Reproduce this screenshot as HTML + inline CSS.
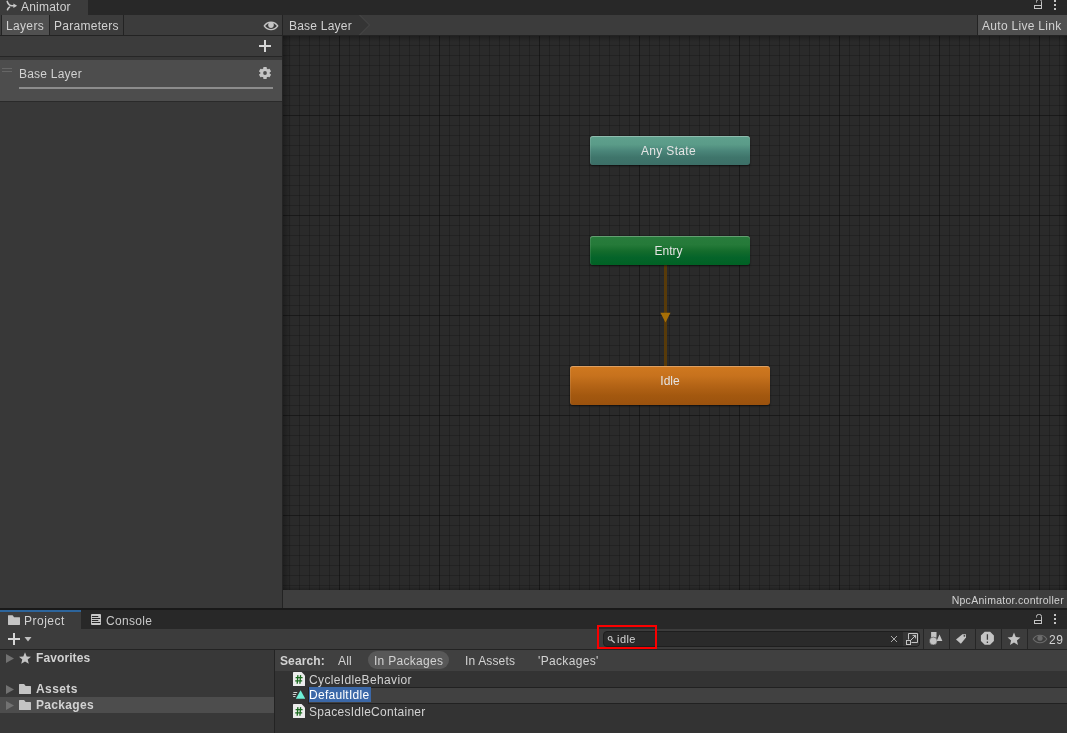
<!DOCTYPE html>
<html><head><meta charset="utf-8"><title>Animator</title>
<style>
*{box-sizing:border-box;margin:0;padding:0}
html,body{width:1067px;height:733px;overflow:hidden;background:#383838}
body{position:relative;font-family:"Liberation Sans",sans-serif;font-size:12px;color:#d2d2d2;line-height:16px;-webkit-font-smoothing:antialiased}
.a{position:absolute}
.t{position:absolute;white-space:nowrap;line-height:16px;height:16px;letter-spacing:.22px;will-change:transform}
.b{font-weight:bold;letter-spacing:0}
svg{position:absolute;overflow:visible}
</style></head><body>

<!-- ===== Animator window ===== -->
<div class="a" style="left:0;top:0;width:1067px;height:15px;background:#282828"></div>
<div class="a" style="left:0;top:0;width:88px;height:15px;background:#3c3c3c"></div>
<svg style="left:0;top:0" width="20" height="12" viewBox="0 0 20 12"><path d="M7.2 1.4C8 3.8 9.6 5.600 12 5.800H14.2M7.500 9.700C7.800 8.600 8.500 7.700 9.500 7.100" fill="none" stroke="#c8c8c8" stroke-width="1.600" stroke-linecap="round"/><path d="M13.400 3.500L17.100 5.800L13.400 8.100Z" fill="#c8c8c8"/></svg>
<div class="t" style="left:21px;top:-1px">Animator</div>
<!-- lock + menu (top) -->
<svg style="left:1033px;top:-2px" width="12" height="12" viewBox="0 0 12 12"><rect x="1.5" y="7.5" width="7" height="3" fill="none" stroke="#c4c4c4" stroke-width="1"/><path d="M3.5 4.5V3.5Q3.5 1.5 5.5 1.5H6.5Q8.5 1.5 8.5 3.5V7.5" fill="none" stroke="#c4c4c4" stroke-width="1"/></svg>
<div class="a" style="left:1054px;top:0;width:2px;height:2px;background:#c4c4c4"></div>
<div class="a" style="left:1054px;top:4px;width:2px;height:2px;background:#c4c4c4"></div>
<div class="a" style="left:1054px;top:8px;width:2px;height:2px;background:#c4c4c4"></div>

<div class="a" style="left:0;top:15px;width:1067px;height:21px;background:#3c3c3c;border-bottom:1px solid #232323"></div>
<div class="a" style="left:1px;top:15px;width:1px;height:20px;background:#232323"></div>
<div class="a" style="left:2px;top:15px;width:48px;height:20px;background:#505050;border-right:1px solid #232323"></div>
<div class="a" style="left:50px;top:15px;width:74px;height:20px;border-right:1px solid #232323"></div>
<div class="t" style="left:6px;top:18px;letter-spacing:.34px">Layers</div>
<div class="t" style="left:54px;top:18px;letter-spacing:.27px">Parameters</div>
<!-- eye -->
<svg style="left:263px;top:20px" width="16" height="12" viewBox="0 0 16 12"><path d="M1.300 5.900C3 3.200 5.500 2.200 8 2.200S13 3.200 14.700 5.900C13 8.600 10.500 9.600 8 9.600S3 8.600 1.300 5.900Z" fill="none" stroke="#c4c4c4" stroke-width="1.400"/><circle cx="8" cy="5.100" r="2.800" fill="#c4c4c4"/></svg>

<!-- left panel -->
<div class="a" style="left:0;top:36px;width:282px;height:21px;background:#3c3c3c;border-bottom:1px solid #262626"></div>
<div class="a" style="left:259px;top:45px;width:12px;height:2px;background:#d6d6d6"></div>
<div class="a" style="left:264px;top:40px;width:2px;height:12px;background:#d6d6d6"></div>
<div class="a" style="left:0;top:60px;width:282px;height:42px;background:#4d4d4d;border-bottom:1px solid #2a2a2a"></div>
<div class="a" style="left:2px;top:68px;width:10px;height:1px;background:#666"></div>
<div class="a" style="left:2px;top:71px;width:10px;height:1px;background:#666"></div>
<div class="t" style="left:19px;top:66px">Base Layer</div>
<div class="a" style="left:19px;top:87px;width:254px;height:2px;background:#8c8c8c"></div>
<!-- gear -->
<svg style="left:259px;top:67px" width="12" height="12" viewBox="-6 -6 12 12"><g fill="#c4c4c4"><circle r="4.700"/><rect x="-1.700" y="-6.100" width="3.400" height="12.200" rx=".5"/><rect x="-1.700" y="-6.100" width="3.400" height="12.200" rx=".5" transform="rotate(60)"/><rect x="-1.700" y="-6.100" width="3.400" height="12.200" rx=".5" transform="rotate(120)"/></g><circle r="1.900" fill="#4d4d4d"/></svg>

<!-- graph -->
<div class="a" style="left:283px;top:36px;width:784px;height:554px;background-color:#2a2a2a;
background-image:
linear-gradient(to right,rgba(0,0,0,.26) 1px,transparent 1px),
linear-gradient(to bottom,rgba(0,0,0,.26) 1px,transparent 1px),
linear-gradient(to right,rgba(0,0,0,.18) 1px,transparent 1px),
linear-gradient(to bottom,rgba(0,0,0,.18) 1px,transparent 1px);
background-size:100px 100px,100px 100px,10px 10px,10px 10px;
background-position:56px 0,0 79px,6px 0,0 9px"></div>
<div class="a" style="left:283px;top:36px;width:8px;height:554px;background:linear-gradient(to right,rgba(0,0,0,.28),rgba(0,0,0,0))"></div>
<div class="a" style="left:283px;top:36px;width:784px;height:6px;background:linear-gradient(to bottom,rgba(0,0,0,.25),rgba(0,0,0,0))"></div>
<div class="a" style="left:1062px;top:36px;width:5px;height:554px;background:linear-gradient(to left,rgba(0,0,0,.25),rgba(0,0,0,0))"></div>
<div class="a" style="left:283px;top:586px;width:784px;height:4px;background:linear-gradient(to top,rgba(0,0,0,.22),rgba(0,0,0,0))"></div>
<div class="a" style="left:282px;top:15px;width:1px;height:593px;background:#232323"></div>

<!-- breadcrumb -->
<svg style="left:283px;top:15px" width="90" height="20" viewBox="0 0 90 20"><path d="M0 0H76.5L86.5 10L76.5 20H0Z" fill="#353535"/><path d="M76.5 0L86.5 10L76.5 20" fill="none" stroke="#4a4a4a" stroke-width="1"/></svg>
<div class="t" style="left:289px;top:18px">Base Layer</div>
<div class="a" style="left:977px;top:15px;width:90px;height:20px;background:#505050;border-left:1px solid #232323"></div>
<div class="t" style="left:982px;top:18px;letter-spacing:.3px">Auto Live Link</div>

<!-- nodes -->
<div class="a" style="left:664px;top:265px;width:3px;height:101px;background:#573a09"></div>
<svg style="left:660px;top:312px" width="12" height="12" viewBox="0 0 12 12"><path d="M0.4 0.7H10.5L5.5 10.5Z" fill="#a66f06"/></svg>
<div class="a" style="left:590px;top:136px;width:160px;height:29px;border-radius:3px;background:linear-gradient(#5fa18d,#5a9b88 30%,#4a8579 52%,#3f756b 74%,#3c6f67);box-shadow:0 1px 2px rgba(0,0,0,.55),inset 0 1px 0 rgba(255,255,255,.3),inset 1px 0 0 rgba(255,255,255,.1)"></div>
<div class="t" style="left:590px;top:143px;width:157px;text-align:center;color:#e4e4e4;letter-spacing:.32px">Any State</div>
<div class="a" style="left:590px;top:236px;width:160px;height:29px;border-radius:3px;background:linear-gradient(#287c3c,#257a39 30%,#146c2c 52%,#05642a 74%,#006224);box-shadow:0 1px 2px rgba(0,0,0,.55),inset 0 1px 0 rgba(255,255,255,.28),inset 1px 0 0 rgba(255,255,255,.1)"></div>
<div class="t" style="left:590px;top:243px;width:157px;text-align:center;color:#e4e4e4;letter-spacing:0">Entry</div>
<div class="a" style="left:570px;top:366px;width:200px;height:39px;border-radius:3px;background:linear-gradient(#cf781f,#c7721d 25%,#b46416 50%,#a3580f 76%,#9b520e);box-shadow:0 1px 2px rgba(0,0,0,.55),inset 0 1px 0 rgba(255,255,255,.3),inset 1px 0 0 rgba(255,255,255,.1)"></div>
<div class="t" style="left:570px;top:373px;width:200px;text-align:center;color:#e4e4e4;letter-spacing:0">Idle</div>

<!-- footer -->
<div class="a" style="left:283px;top:590px;width:784px;height:18px;background:#3e3e3e"></div>
<div class="t" style="left:851px;top:592px;width:213px;text-align:right;font-size:10.5px;letter-spacing:.28px">NpcAnimator.controller</div>

<!-- separator -->
<div class="a" style="left:0;top:608px;width:1067px;height:2px;background:#191919"></div>

<!-- ===== Project window ===== -->
<div class="a" style="left:0;top:610px;width:1067px;height:19px;background:#282828"></div>
<div class="a" style="left:0;top:610px;width:81px;height:19px;background:#3c3c3c;border-top:2px solid #2d659c"></div>
<svg style="left:7px;top:614px" width="14" height="12" viewBox="0 0 14 12"><path d="M1 1.6Q1 1.2 1.4 1.2H5.2Q5.6 1.2 5.9 1.6L7 3.2H12.6Q13 3.2 13 3.6V10.6Q13 11 12.6 11H1.4Q1 11 1 10.6Z" fill="#c4c4c4"/></svg>
<div class="t" style="left:24px;top:613px;letter-spacing:.5px">Project</div>
<svg style="left:90px;top:614px" width="12" height="12" viewBox="0 0 12 12"><rect x="1" y="0" width="10" height="11" rx="1" fill="#c8c8c8"/><path d="M2.300 2.500H7.900M2.300 4.500H9.800M2.300 6.500H7.900M2.300 8.500H9.800" stroke="#282828" stroke-width="1" stroke-linecap="round"/></svg>
<div class="t" style="left:106px;top:613px;color:#c8c8c8;letter-spacing:.3px">Console</div>
<svg style="left:1033px;top:613px" width="12" height="12" viewBox="0 0 12 12"><rect x="1.5" y="7.5" width="7" height="3" fill="none" stroke="#c4c4c4" stroke-width="1"/><path d="M3.5 4.5V3.5Q3.5 1.5 5.5 1.5H6.5Q8.5 1.5 8.5 3.5V7.5" fill="none" stroke="#c4c4c4" stroke-width="1"/></svg>
<div class="a" style="left:1054px;top:614px;width:2px;height:2px;background:#c4c4c4"></div>
<div class="a" style="left:1054px;top:618px;width:2px;height:2px;background:#c4c4c4"></div>
<div class="a" style="left:1054px;top:622px;width:2px;height:2px;background:#c4c4c4"></div>

<div class="a" style="left:0;top:629px;width:1067px;height:21px;background:#3c3c3c;border-bottom:1px solid #232323"></div>
<div class="a" style="left:8px;top:638px;width:12px;height:2px;background:#d6d6d6"></div>
<div class="a" style="left:13px;top:633px;width:2px;height:12px;background:#d6d6d6"></div>
<svg style="left:24px;top:636px" width="8" height="6" viewBox="0 0 8 6"><path d="M.500 .900H7.500L4 5.500Z" fill="#c0c0c0"/></svg>

<!-- tree -->
<div class="a" style="left:0;top:650px;width:274px;height:83px;background:#383838"></div>
<div class="a" style="left:0;top:697px;width:274px;height:16px;background:#4d4d4d"></div>
<svg style="left:0;top:650px" width="36" height="70" viewBox="0 0 36 70">
<path d="M6 4L14 8.5L6 13Z M6 35L14 39.5L6 44Z M6 51L14 55.5L6 60Z" fill="#727272"/>
<path d="M25 2.2L26.7 6.4L31 6.7L27.7 9.5L28.8 13.8L25 11.4L21.2 13.8L22.3 9.5L19 6.7L23.3 6.4Z" fill="#c4c4c4"/>
<path id="fo" d="M19 34.6Q19 34 19.6 34H23.8Q24.3 34 24.6 34.4L25.6 36H30.4Q31 36 31 36.6V43.4Q31 44 30.4 44H19.6Q19 44 19 43.4Z" fill="#c4c4c4"/>
<path d="M19 50.6Q19 50 19.6 50H23.8Q24.3 50 24.6 50.4L25.6 52H30.4Q31 52 31 52.6V59.4Q31 60 30.4 60H19.6Q19 60 19 59.4Z" fill="#c4c4c4"/>
</svg>
<div class="t b" style="left:36px;top:650px;letter-spacing:.1px">Favorites</div>
<div class="t b" style="left:36px;top:681px;letter-spacing:.4px">Assets</div>
<div class="t b" style="left:36px;top:697px;letter-spacing:.33px">Packages</div>
<div class="a" style="left:274px;top:650px;width:1px;height:83px;background:#232323"></div>

<!-- list -->
<div class="a" style="left:275px;top:650px;width:792px;height:21px;background:#404040"></div>
<div class="a" style="left:275px;top:671px;width:792px;height:62px;background:#333333"></div>
<div class="t b" style="left:280px;top:653px;letter-spacing:.1px">Search:</div>
<div class="t" style="left:338px;top:653px">All</div>
<div class="a" style="left:368px;top:651px;width:81px;height:18px;border-radius:9px;background:#585858"></div>
<div class="t" style="left:374px;top:653px;letter-spacing:.29px">In Packages</div>
<div class="t" style="left:465px;top:653px;letter-spacing:.15px">In Assets</div>
<div class="t" style="left:538px;top:653px;letter-spacing:.34px">'Packages'</div>

<div class="a" style="left:308px;top:687px;width:759px;height:17px;background:#414141;border-top:1px solid #212121;border-bottom:1px solid #212121;border-left:1px solid #212121"></div>
<div class="a" style="left:309px;top:687px;width:62px;height:15px;background:#3b68a8"></div>
<div class="t" style="left:309px;top:672px;letter-spacing:.36px">CycleIdleBehavior</div>
<div class="t" style="left:309px;top:686.5px;color:#fff;letter-spacing:.28px">DefaultIdle</div>
<div class="t" style="left:309px;top:703.5px;letter-spacing:.27px">SpacesIdleContainer</div>
<!-- file icons -->
<svg style="left:293px;top:672px" width="12" height="14" viewBox="0 0 12 14"><path d="M.6 0H8.6L12 3.4V13.4Q12 14 11.4 14H.6Q0 14 0 13.4V.6Q0 0 .6 0Z" fill="#ececec"/><path d="M4.900 3.100L4.200 11.700M7.600 3.100L6.900 11.700M2.600 5.700H9.600M2.200 8.900H9.200" stroke="#1b6a1f" stroke-width="1.300" fill="none"/></svg>
<svg style="left:293px;top:704px" width="12" height="14" viewBox="0 0 12 14"><path d="M.6 0H8.6L12 3.4V13.4Q12 14 11.4 14H.6Q0 14 0 13.4V.6Q0 0 .6 0Z" fill="#ececec"/><path d="M4.900 3.100L4.200 11.700M7.600 3.100L6.900 11.700M2.600 5.700H9.600M2.200 8.900H9.200" stroke="#1b6a1f" stroke-width="1.300" fill="none"/></svg>
<svg style="left:292px;top:689px" width="14" height="11" viewBox="0 0 14 11"><path d="M8.6 1.2L13 9.2Q13.2 9.8 12.6 9.8H4.4Q3.8 9.8 4.1 9.2Z" fill="#6ff0d8"/><path d="M1.4 3.5H5.2M.8 5.500H4.200M1.200 7.500H3.400" stroke="#d0d0d0" stroke-width="1"/></svg>

<!-- search -->
<div class="a" style="left:603px;top:631px;width:317px;height:16px;background:#2a2a2a;border:1px solid #1e1e1e;border-radius:4px"></div>
<div class="a" style="left:903px;top:632px;width:16px;height:14px;background:#363636;border-radius:0 3px 3px 0"></div>
<svg style="left:607px;top:635px" width="9" height="10" viewBox="0 0 9 10"><circle cx="3.100" cy="3.400" r="1.900" fill="none" stroke="#c8c8c8" stroke-width="1.100"/><path d="M4.500 4.900L7.700 7.700" stroke="#c8c8c8" stroke-width="1.300"/></svg>
<div class="t" style="left:617px;top:631px;font-size:11px;letter-spacing:.45px">idle</div>
<svg style="left:890px;top:635px" width="8" height="8" viewBox="0 0 8 8"><path d="M1 1L7 7M7 1L1 7" stroke="#aaa" stroke-width="1"/></svg>
<svg style="left:905px;top:632px" width="14" height="14" viewBox="0 0 14 14"><path d="M3.5 7.5V1.5H12.5V10.5H6.5" fill="none" stroke="#c4c4c4" stroke-width="1"/><rect x="1.5" y="8.5" width="4" height="4" fill="none" stroke="#c4c4c4" stroke-width="1"/><path d="M6 8L10.6 3.4M7.6 3.4H10.6V6.4" fill="none" stroke="#c4c4c4" stroke-width="1"/></svg>
<div class="a" style="left:597px;top:625px;width:60px;height:24px;border:2px solid #fa0000"></div>
<!-- toolbar buttons -->
<div class="a" style="left:923px;top:629px;width:1px;height:20px;background:#262626"></div>
<div class="a" style="left:949px;top:629px;width:1px;height:20px;background:#262626"></div>
<div class="a" style="left:975px;top:629px;width:1px;height:20px;background:#262626"></div>
<div class="a" style="left:1001px;top:629px;width:1px;height:20px;background:#262626"></div>
<div class="a" style="left:1027px;top:629px;width:1px;height:20px;background:#262626"></div>
<svg style="left:929px;top:631px" width="14" height="15" viewBox="0 0 14 15"><rect x="2.1" y="1" width="5.4" height="5.6" fill="#c4c4c4"/><circle cx="4.3" cy="10" r="3.9" fill="#c4c4c4" stroke="#3c3c3c" stroke-width=".5"/><path d="M10.5 3.4L13.4 9.900H7.600Z" fill="#c4c4c4"/></svg>
<svg style="left:955px;top:632px" width="13" height="13" viewBox="0 0 13 13"><path d="M1 7.6L7.4 2.2H11V5.6L5.9 11.8Z" fill="#c4c4c4"/><circle cx="9.4" cy="3.8" r=".9" fill="#3c3c3c"/></svg>
<svg style="left:980px;top:631px" width="15" height="15" viewBox="0 0 15 15"><path d="M4.7 .8H10.1L13.9 4.6V10L10.1 13.8H4.7L.9 10V4.600Z" fill="#c4c4c4"/><path d="M7.400 3.200V8.800M7.400 10.400V11.900" stroke="#3c3c3c" stroke-width="1.300"/></svg>
<svg style="left:1007px;top:632px" width="14" height="14" viewBox="0 0 14 14"><path d="M7 .6L8.8 5.100L13.4 5.400L9.900 8.400L11 13L7 10.500L3 13L4.100 8.400L.6 5.400L5.200 5.100Z" fill="#c4c4c4"/></svg>
<svg style="left:1032px;top:634px" width="16" height="10" viewBox="0 0 16 10"><path d="M1.200 5C3 2.200 5.500 1.300 8 1.300S13 2.200 14.800 5C13 7.800 10.500 8.700 8 8.700S3 7.800 1.200 5Z" fill="none" stroke="#6c6c6c" stroke-width="1.100"/><circle cx="8" cy="4.200" r="2.600" fill="#6c6c6c"/></svg>
<div class="t" style="left:1049px;top:632px;letter-spacing:.6px">29</div>

</body></html>
